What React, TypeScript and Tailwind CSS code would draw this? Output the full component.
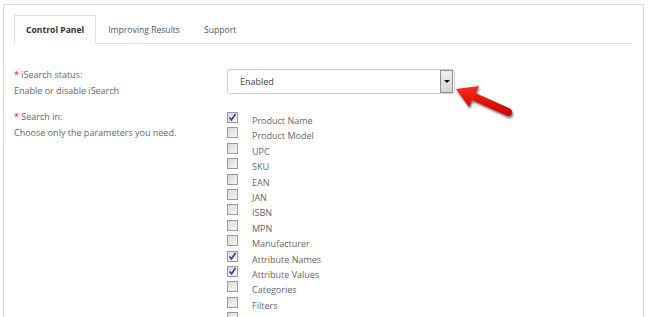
import React from "react";

const fields = [
  { name: "Product Name", on: true },
  { name: "Product Model", on: false },
  { name: "UPC", on: false },
  { name: "SKU", on: false },
  { name: "EAN", on: false },
  { name: "JAN", on: false },
  { name: "ISBN", on: false },
  { name: "MPN", on: false },
  { name: "Manufacturer", on: false },
  { name: "Attribute Names", on: true },
  { name: "Attribute Values", on: true },
  { name: "Categories", on: false },
  { name: "Filters", on: false },
];

const Checkbox = ({ on }: { on: boolean }) => (
  <span className="relative flex h-[11px] w-[11px] shrink-0 items-center justify-center border border-[#9a9a9a] bg-gradient-to-br from-[#d8d8d8] to-[#f7f7f7]">
    {on && (
      <svg width="9" height="9" viewBox="0 0 9 9" className="absolute">
        <path d="M1.5 4.5 L3.5 7 L7.5 1" fill="none" stroke="#2a3d9c" strokeWidth="1.6" />
      </svg>
    )}
  </span>
);

const RedArrow = () => (
  <svg
    width="72"
    height="46"
    viewBox="0 0 72 46"
    className="absolute left-[449px] top-[80px]"
    style={{ filter: "drop-shadow(1px 2px 1px rgba(0,0,0,0.55))" }}
  >
    <defs>
      <linearGradient id="ra" x1="0" y1="0" x2="0" y2="1">
        <stop offset="0" stopColor="#ff2a1a" />
        <stop offset="1" stopColor="#c80000" />
      </linearGradient>
    </defs>
    <path
      d="M7 9 L30 6 L26.5 13 L61 28.5 Q64.5 31 62.5 34.5 Q60.5 37 57.5 35.5 L23 20 L20 27 Z"
      fill="url(#ra)"
    />
  </svg>
);

export default function App() {
  return (
    <div className="relative h-[317px] w-[650px] overflow-hidden bg-white font-['Open_Sans',sans-serif] text-[9px] text-[#666]">
      <div className="ml-[3px] mt-[4px] h-[320px] w-[641px] border-l border-r border-t border-[#d9d9d9] pl-[10px] pr-[11px] pt-[10px]">
        <div className="flex h-[29px] items-end border-b border-[#dedede] text-[8.6px]">
          <div className="-mb-px flex h-[29px] items-center border border-b-white border-[#dedede] bg-white px-[11px] pt-[2px] font-bold text-[#333]">
            Control Panel
          </div>
          <div className="flex h-[28px] items-center px-[12px] pt-[2px] text-[#555]">Improving Results</div>
          <div className="flex h-[28px] items-center px-[12px] pt-[2px] text-[#555]">Support</div>
        </div>

        <div className="mt-[23px] flex">
          <div className="w-[213px] leading-[16px]">
            <div>
              <span className="text-[#f00]">*</span> iSearch status:
            </div>
            <div>Enable or disable iSearch</div>
          </div>
          <div className="mt-[2px] flex h-[25px] w-[228px] items-center justify-between rounded-[3px] border border-[#cfcfcf] pl-[12px] pr-px text-[#444] shadow-[inset_0_1px_1px_rgba(0,0,0,0.05)]">
            <span>Enabled</span>
            <span className="flex h-[23px] w-[13px] items-center justify-center border border-[#8f8f8f] bg-gradient-to-b from-[#f0f0f0] to-[#d4d4d4]">
              <span className="h-0 w-0 border-l-[3px] border-r-[3px] border-t-[3px] border-l-transparent border-r-transparent border-t-black" />
            </span>
          </div>
        </div>

        <div className="mt-[10px] flex">
          <div className="w-[213px] leading-[16px]">
            <div>
              <span className="text-[#f00]">*</span> Search in:
            </div>
            <div>Choose only the parameters you need.</div>
          </div>
          <div className="mt-[3px] flex flex-col">
            {fields.map((f) => (
              <div key={f.name} className="flex h-[15.4px] items-start gap-[14px]">
                <Checkbox on={f.on} />
                <span className="mt-[1px] leading-[15px]">{f.name}</span>
              </div>
            ))}
            <div className="flex h-[15.4px] items-start">
              <Checkbox on={false} />
            </div>
          </div>
        </div>
      </div>
      <RedArrow />
    </div>
  );
}
